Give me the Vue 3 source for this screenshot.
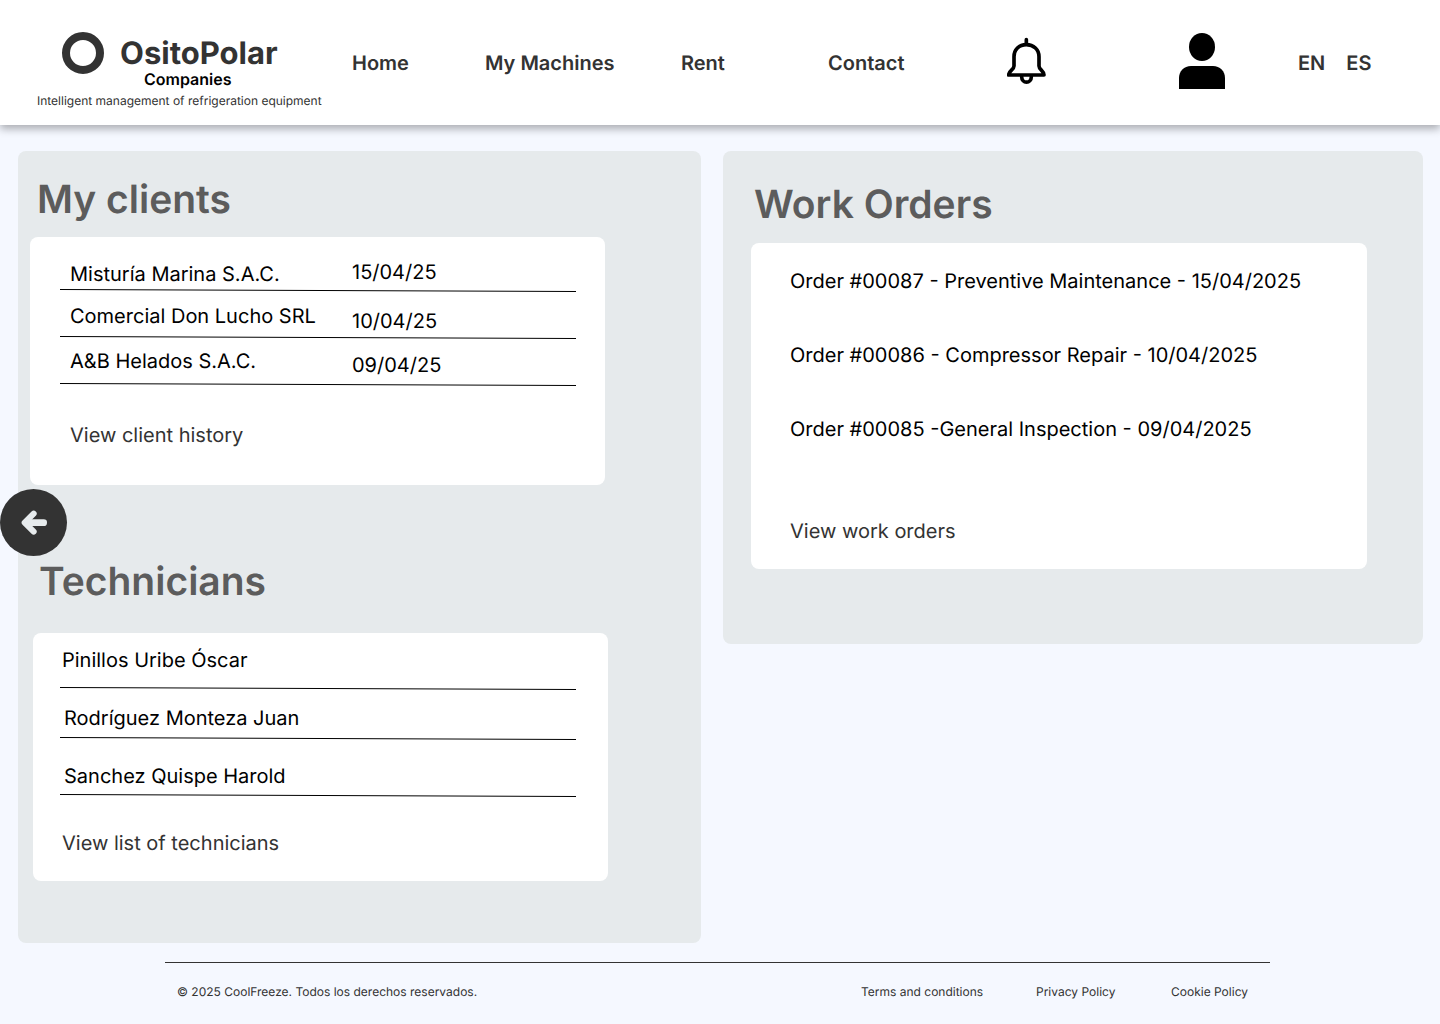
<script setup>
const navLinks = ['Home', 'My Machines', 'Rent', 'Contact']

const clients = [
  { name: 'Misturía Marina S.A.C.', date: '15/04/25' },
  { name: 'Comercial Don Lucho SRL', date: '10/04/25' },
  { name: 'A&B Helados S.A.C.', date: '09/04/25' },
]

const technicians = ['Pinillos Uribe Óscar', 'Rodríguez Monteza Juan', 'Sanchez Quispe Harold']

const orders = [
  'Order #00087 - Preventive Maintenance - 15/04/2025',
  'Order #00086 - Compressor Repair - 10/04/2025',
  'Order #00085 -General Inspection - 09/04/2025',
]

const legalLinks = ['Terms and conditions', 'Privacy Policy', 'Cookie Policy']
</script>

<template>
  <div class="page">
    <header class="topbar">
      <a class="brand" href="#">
        <span class="ring"></span>
        <span class="brand-text">
          <span class="brand-name">OsitoPolar</span>
          <span class="brand-sub">Companies</span>
        </span>
        <span class="tagline">Intelligent management of refrigeration equipment</span>
      </a>
      <nav class="nav">
        <a v-for="link in navLinks" :key="link" href="#">{{ link }}</a>
      </nav>
      <button class="icon-button" type="button" aria-label="Notifications">
        <svg width="40" height="48" viewBox="81 49 120 144" fill="none" stroke="#000" stroke-linejoin="round" stroke-linecap="round">
          <path d="M139 57V68" stroke-width="11" />
          <path d="M139 72C117 72 102 87 102 108V136C102 147 86 150 86 163H192C192 150 177 147 177 136V108C177 87 161 72 139 72Z" stroke-width="11" />
          <path d="M125 168C125 190 154 190 154 168" stroke-width="11" />
        </svg>
      </button>
      <button class="icon-button" type="button" aria-label="Account">
        <svg width="46" height="56" viewBox="0 0 46 56">
          <ellipse cx="23" cy="14" rx="13" ry="14" />
          <path d="M0 56V45C0 38 5 33 12 33H34C41 33 46 38 46 45V56Z" />
        </svg>
      </button>
      <div class="languages">
        <button type="button">EN</button>
        <button type="button">ES</button>
      </div>
    </header>

    <button class="back" type="button" aria-label="Back">
      <svg width="67" height="67" viewBox="0 0 201 201" fill="none" stroke="#e7ebed" stroke-width="18" stroke-linecap="round" stroke-linejoin="round">
        <path d="M101 74L74 101L101 128" />
        <path d="M79 101H131" stroke-width="20" />
      </svg>
    </button>

    <main class="content">
      <div class="panel people">
        <section>
          <h2>My clients</h2>
          <div class="card clients">
            <table>
              <tbody>
                <tr v-for="client in clients" :key="client.name" class="ruled">
                  <th scope="row">{{ client.name }}</th>
                  <td>{{ client.date }}</td>
                </tr>
              </tbody>
            </table>
            <a class="more" href="#">View client history</a>
          </div>
        </section>
        <section class="technicians">
          <h2>Technicians</h2>
          <div class="card">
            <ul>
              <li v-for="person in technicians" :key="person" class="ruled">{{ person }}</li>
            </ul>
            <a class="more" href="#">View list of technicians</a>
          </div>
        </section>
      </div>

      <section class="panel orders">
        <h2>Work Orders</h2>
        <div class="card">
          <ul>
            <li v-for="order in orders" :key="order">{{ order }}</li>
          </ul>
          <a class="more" href="#">View work orders</a>
        </div>
      </section>
    </main>

    <footer class="footer">
      <span>© 2025 CoolFreeze. Todos los derechos reservados.</span>
      <nav class="legal">
        <a v-for="link in legalLinks" :key="link" href="#">{{ link }}</a>
      </nav>
    </footer>
  </div>
</template>

<style>
body {
  margin: 0;
  background: #f5f8ff;
}
</style>

<style scoped>
.page {
  position: relative;
  min-height: 100vh;
  box-sizing: border-box;
  background: #f5f8ff;
  color: #000;
  font-family: Inter, "Liberation Sans", sans-serif;
  font-size: 20px;
  line-height: 24px;
  text-rendering: geometricPrecision;
}

a {
  color: #333;
  text-decoration: none;
}

button {
  padding: 0;
  border: 0;
  background: none;
  color: #333;
  font: inherit;
  text-rendering: inherit;
  cursor: pointer;
}

svg {
  display: block;
}

ul {
  margin: 0;
  padding: 0;
  list-style: none;
}

.topbar {
  position: relative;
  display: grid;
  grid-template-columns: 352fr 655fr 172fr 119fr 142fr;
  min-height: 125px;
  background: #fff;
  box-shadow: 0 4px 8px rgba(0, 0, 0, 0.3);
  font-weight: 600;
}

.brand {
  display: grid;
  grid-template-columns: 59px auto;
  justify-content: start;
  align-content: start;
  padding: 32px 0 0 37px;
}

.ring {
  width: 42px;
  height: 42px;
  margin-left: 25px;
  box-sizing: border-box;
  border: 8px solid #333;
  border-radius: 50%;
}

.brand-text {
  display: flex;
  flex-direction: column;
  padding: 4px 0 0 24px;
}

.brand-name {
  font-size: 31px;
  font-weight: 700;
  line-height: 36px;
}

.brand-sub {
  padding-left: 24px;
  color: #000;
  font-size: 16px;
  line-height: 14px;
}

.tagline {
  grid-column: 1 / -1;
  padding-top: 7px;
  font-size: 12px;
  font-weight: 400;
  line-height: 16px;
  white-space: nowrap;
}

.nav {
  display: grid;
  grid-template-columns: 133fr 196fr 147fr 179fr;
  align-self: center;
}

.icon-button {
  align-self: center;
  justify-self: start;
  padding-bottom: 4px;
}

.languages {
  display: flex;
  gap: 21px;
  align-self: center;
}

.back {
  position: absolute;
  top: 489px;
  left: 0;
  z-index: 1;
  border-radius: 50%;
  background: #333;
}

.content {
  display: grid;
  grid-template-columns: 683fr 700fr;
  gap: 22px;
  align-items: start;
  padding: 26px 17px 0 18px;
}

.panel {
  border-radius: 8px;
  background: #e6eaec;
}

.people {
  padding: 24px 96px 62px 12px;
}

.technicians {
  margin: 72px -3px 0 3px;
}

h2 {
  margin: 0 0 12px;
  padding-left: 7px;
  color: #5c5c5c;
  font-size: 39px;
  font-weight: 600;
  line-height: 50px;
}

.card {
  box-sizing: border-box;
  min-height: 248px;
  border-radius: 8px;
  background: #fff;
}

/* Hand-drawn rule that drops slightly from left to right */
.ruled {
  background: url("data:image/svg+xml,%3Csvg xmlns='http://www.w3.org/2000/svg' viewBox='0 0 516 3' preserveAspectRatio='none'%3E%3Cpath d='M0 .5L516 2.5' stroke='%23000'/%3E%3C/svg%3E") bottom / 100% 3px no-repeat;
}

.clients {
  padding: 18px 29px 0 30px;
}

table {
  width: 100%;
  border-collapse: collapse;
}

tr {
  height: 47px;
}

tr:first-child {
  height: 37px;
}

th,
td {
  padding: 0;
  font-weight: 400;
  text-align: left;
}

th {
  width: 282px;
  padding-left: 10px;
}

td {
  padding-bottom: 4px;
}

tr + tr td {
  padding: 10px 0 0;
}

tr:last-child th {
  padding-bottom: 4px;
}

tr:last-child td {
  padding-top: 4px;
}

.more {
  display: inline-block;
}

.clients .more {
  margin: 37px 0 0 10px;
}

.technicians h2 {
  margin-bottom: 26px;
  padding-left: 6px;
}

.technicians .card {
  padding: 0 32px 0 27px;
}

.technicians li {
  padding: 16px 0 10px 4px;
}

.technicians li:first-child {
  padding: 15px 0 18px 2px;
}

.technicians li:last-child {
  padding: 24px 0 9px 4px;
}

.technicians .more {
  margin: 34px 0 0 2px;
}

.orders {
  padding: 29px 56px 75px 28px;
}

.orders h2 {
  margin-bottom: 13px;
  padding-left: 3px;
}

.orders .card {
  min-height: 326px;
  padding: 26px 20px 26px 39px;
}

.orders ul {
  display: flex;
  flex-direction: column;
  gap: 50px;
}

.orders .more {
  margin-top: 78px;
}

.footer {
  display: flex;
  justify-content: space-between;
  margin: 19px 170px 0 165px;
  padding: 21px 22px 0 12px;
  border-top: 1px solid #333;
  color: #333;
  font-size: 12px;
  line-height: 16px;
}

.legal {
  display: grid;
  grid-template-columns: 175px 135px auto;
}
</style>
